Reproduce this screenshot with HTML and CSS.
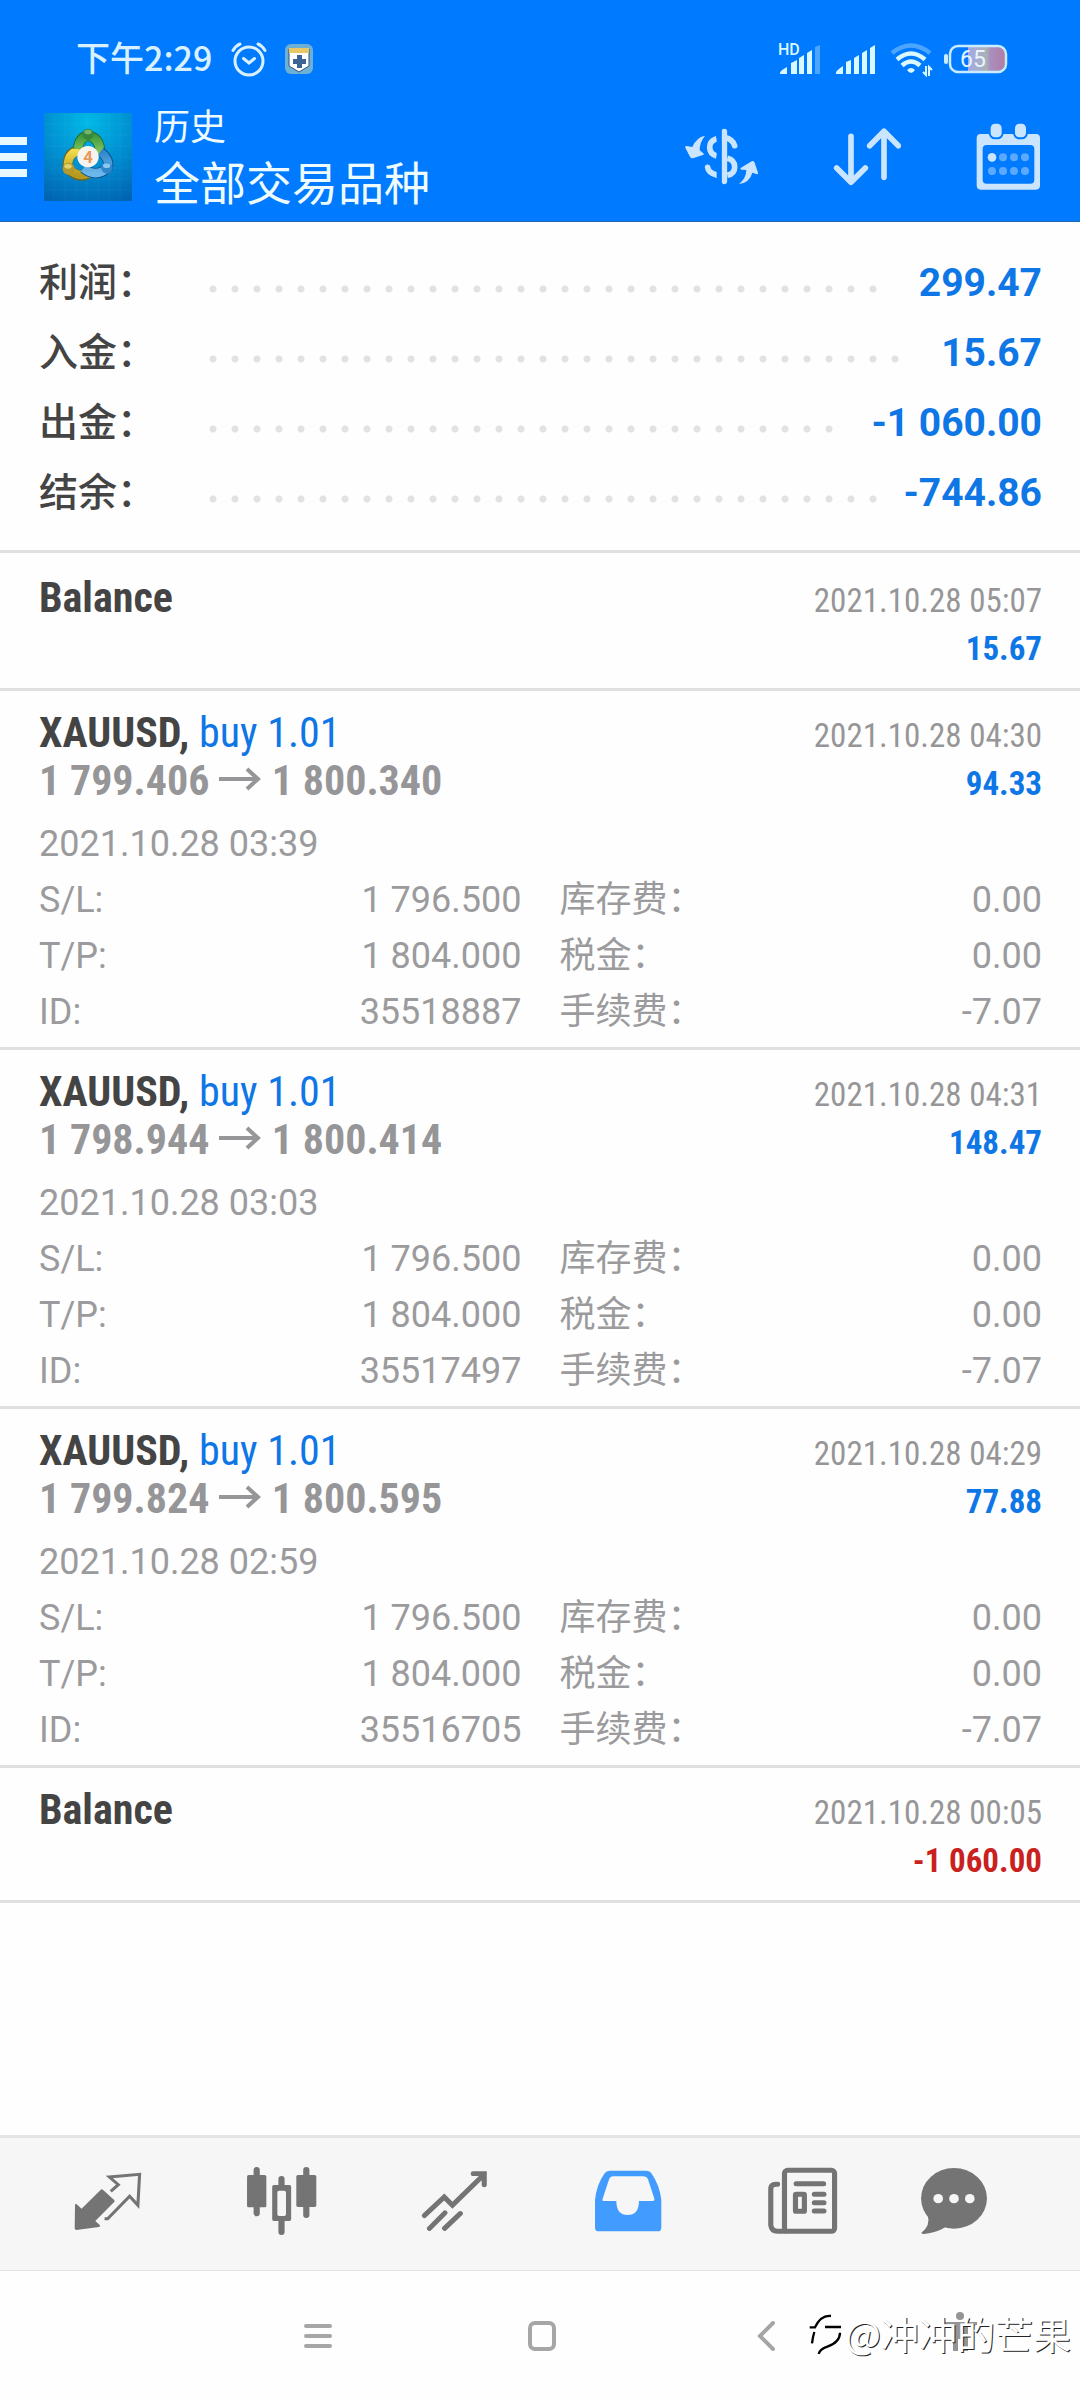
FILE: index.html
```html
<!DOCTYPE html>
<html lang="zh-CN">
<head>
<meta charset="utf-8">
<meta name="viewport" content="width=device-width, initial-scale=1">
<title>历史</title>
<link rel="stylesheet" href="styles.css">
</head>
<body>
<header class="top">
  <div class="status">
    <span class="clock">下午2:29</span>
    <svg class="alarm" width="37" height="36" viewBox="230 41 37 36" fill="none" stroke="#d9f1ff" stroke-width="3" stroke-linecap="round"><circle cx="249" cy="61" r="14"/><path d="M243.500 58.500l5.500 4.500 5.500-4.500M233 50.500q3-5 7-6.500M258 44q4 1.500 7 6.500"/></svg>
    <svg width="28" height="30" viewBox="0 0 28 30"><rect width="28" height="30" rx="6" fill="#6db0d6"/><path d="M4 5h20v17q-5 3-10 6q-5-3-10-6z" fill="#fff" stroke="#35507a" stroke-width="1"/><path d="M4 4h20v5H4z" fill="#e9c765"/><path d="M12 11h5v4h4v5h-4v4h-5v-4H8v-5h4z" fill="#3c6296"/></svg>
    <span class="spacer"></span>
    <svg width="44" height="36" viewBox="778 40 44 36" fill="#d9f8ff"><text class="hd" x="779" y="54">HD</text><path d="M781 73q-1-3 7-7v7zM792 73V62l6-3v14zM800 73V57l5-3v19zM808 73V52l5-3v24z"/><path d="M816 73V46l5-2v29z" opacity=".35"/></svg>
    <svg width="41" height="32" viewBox="835 42 41 32" fill="#d9f8ff"><path d="M836 73q-1-3 7-8v8zM846 73V61l5-2v14zM854 73V57l5-3v19zM862 73V52l5-3v24zM870 73V47l5-3v29z"/></svg>
    <svg width="43" height="36" viewBox="891 42 43 36" fill="none" stroke="#d9f8ff" stroke-width="4.500"><path d="M893 54q19-15 38 0" opacity=".35"/><path d="M898 60.500q14-12 28 0M903 66.500q9-8 18 0"/><path d="M908 71q4-4 8 0q-4 6-8 0z" fill="#d9f8ff" stroke="none"/><path d="M927 67v9l-3-3M930 77v-9l3 3" stroke-width="2"/></svg>
    <svg class="battery" width="64" height="30" viewBox="945 43 64 30"><defs><linearGradient id="charge"><stop offset="0" stop-color="#a5a9e8"/><stop offset=".5" stop-color="#a8b2b4"/><stop offset=".6" stop-color="#a98fc0"/><stop offset="1" stop-color="#b07da4"/></linearGradient></defs><path d="M969 46h29q8 0 8 8v8q0 8-8 8h-29z" fill="url(#charge)"/><rect x="951" y="45" width="56" height="26" rx="8" fill="none" stroke="#c9ecff" stroke-width="2.500"/><rect x="945" y="53" width="4" height="10" rx="2" fill="#c9ecff"/><text class="level" x="961" y="66">65</text></svg>
  </div>
  <div class="appbar">
    <button class="menu" aria-label="菜单"><i></i><i></i><i></i></button>
    <svg class="logo" width="88" height="88" viewBox="42 24 264 264" role="img" aria-label="MetaTrader 4">
      <defs>
        <radialGradient id="sky" cx=".5" cy=".1" r="1"><stop offset="0" stop-color="#00b9e6"/><stop offset=".5" stop-color="#008fd2"/><stop offset="1" stop-color="#0062b0"/></radialGradient>
        <linearGradient id="gr" x2="0" y2="1"><stop offset="0" stop-color="#3f9a3c"/><stop offset="1" stop-color="#8acb62"/></linearGradient>
        <linearGradient id="ye" x2="0" y2="1"><stop offset="0" stop-color="#f2dc4a"/><stop offset="1" stop-color="#b49a20"/></linearGradient>
        <linearGradient id="bl" x2="0" y2="1"><stop offset="0" stop-color="#2f86cc"/><stop offset="1" stop-color="#6db8ea"/></linearGradient>
      </defs>
      <rect x="42" y="24" width="264" height="264" fill="url(#sky)"/>
      <path d="M72 24v264M105 24v264M138 24v264M171 24v264M204 24v264M237 24v264M270 24v264M42 57h264M42 90h264M42 123h264M42 156h264M42 189h264M42 222h264M42 255h264" stroke="#fff" stroke-opacity=".07" stroke-width="2"/>
      <path d="M114 196q-8-50 34-62M174 208q-32 12-56-14" fill="none" stroke="#6f651c" stroke-width="30"/>
      <path d="M114 196q-6-52 36-60M176 206q-34 12-60-14" fill="none" stroke="url(#ye)" stroke-width="25"/>
      <path d="M144 132q4-36 30-40q38 6 36 56" fill="none" stroke="#1c6a3c" stroke-width="31"/>
      <path d="M144 132q4-36 30-40q38 6 36 56" fill="none" stroke="url(#gr)" stroke-width="26"/>
      <path d="M212 140q28 22 22 48q-36 32-74 2" fill="none" stroke="#0c4f8c" stroke-width="30"/>
      <path d="M212 140q28 22 22 48q-36 32-74 2" fill="none" stroke="url(#bl)" stroke-width="25"/>
      <circle cx="174" cy="88" r="17" fill="#37883b"/><ellipse cx="174" cy="81" rx="11" ry="7" fill="#9ad690" opacity=".6"/>
      <circle cx="116" cy="191" r="18" fill="#b39a2a"/><ellipse cx="114" cy="184" rx="11" ry="7" fill="#f7ea8c" opacity=".7"/>
      <circle cx="231" cy="189" r="17" fill="#2f86c8"/><ellipse cx="230" cy="182" rx="11" ry="7" fill="#b5e2ff" opacity=".7"/>
      <circle cx="174" cy="155" r="32" fill="#f7f4f0"/>
      <text class="four" x="174" y="174" text-anchor="middle">4</text>
    </svg>
    <div class="titles"><h1>历史</h1><p>全部交易品种</p></div>
    <button aria-label="交易品种"><svg width="73" height="57" viewBox="136 320 219 171" fill="none" stroke="#cbe5ff" stroke-width="17"><path d="M254 331v149" stroke-linecap="round"/><path d="M231 352q-21 6-21 26t21 26M263 411q22 5 22 26t-22 25"/><path d="M231 461q-25-7-27-23M254 348q26 6 31 25" stroke-linecap="round"/><path d="M231 320h15v171h-15z" fill="#007aff" stroke="none"/><path d="M196 343q-26 5-38 34l-17-3q-6 0-4 5l14 27q3 6 11 4l28-9q5-3 0-6l-10-8q0-24 16-44zM298 488q22-18 22-42l-14-1q-7-2-2-6l32-19q7-3 9 4l10 30q1 6-5 4l-12-4q-8 30-40 34z" fill="#cbe5ff" stroke="none"/></svg></button>
    <button aria-label="排序"><svg width="68" height="59" viewBox="572 320 204 177" fill="none" stroke="#cbe5ff" stroke-width="17" stroke-linecap="round" stroke-linejoin="round"><path d="M626 348v136M583 443l43 43 43-43M725 471V334M682 376l43-43 43 43"/></svg></button>
    <button aria-label="日期"><svg width="65" height="67" viewBox="1008 306 195 201" fill="#cbe5ff"><path fill-rule="evenodd" d="M1022 339h166q12 0 12 12v142q0 13-12 13h-166q-12 0-12-13V351q0-12 12-12zM1040 372q-12 0-12 12v92q0 12 12 12h131q12 0 12-12v-92q0-12-12-12z"/><rect x="1049" y="305" width="39" height="47" rx="16" stroke="#007aff" stroke-width="6"/><rect x="1122" y="305" width="39" height="47" rx="16" stroke="#007aff" stroke-width="6"/><circle cx="1056" cy="409" r="13"/><g opacity=".45"><circle cx="1089" cy="409" r="12"/><circle cx="1122" cy="409" r="12"/><circle cx="1155" cy="409" r="12"/><circle cx="1056" cy="450" r="12"/><circle cx="1089" cy="450" r="12"/><circle cx="1122" cy="450" r="12"/><circle cx="1155" cy="450" r="12"/></g></svg></button>
  </div>
</header>

<main class="content">
  <dl class="summary">
    <div><dt>利润：</dt><dd><span class="dots"></span>299.47</dd></div>
    <div><dt>入金：</dt><dd><span class="dots"></span>15.67</dd></div>
    <div><dt>出金：</dt><dd><span class="dots"></span>-1 060.00</dd></div>
    <div><dt>结余：</dt><dd><span class="dots"></span>-744.86</dd></div>
  </dl>
  <ul class="history">
    <li class="deal">
      <div class="line"><b>Balance</b><time>2021.10.28 05:07</time></div>
      <div class="line"><span></span><strong>15.67</strong></div>
    </li>
    <li class="deal trade">
      <div class="line"><span><b>XAUUSD,</b> <span class="side">buy 1.01</span></span><time>2021.10.28 04:30</time></div>
      <div class="line"><span class="prices">1 799.406 <svg width="43" height="24" viewBox="0 0 43 24"><path d="M0 12h39M28 2l11 10-11 10"/></svg> 1 800.340</span><strong>94.33</strong></div>
      <time class="opened">2021.10.28 03:39</time>
      <dl class="details">
        <div><dt>S/L:</dt><dd>1 796.500</dd></div><div><dt>库存费：</dt><dd>0.00</dd></div>
        <div><dt>T/P:</dt><dd>1 804.000</dd></div><div><dt>税金：</dt><dd>0.00</dd></div>
        <div><dt>ID:</dt><dd>35518887</dd></div><div><dt>手续费：</dt><dd>-7.07</dd></div>
      </dl>
    </li>
    <li class="deal trade">
      <div class="line"><span><b>XAUUSD,</b> <span class="side">buy 1.01</span></span><time>2021.10.28 04:31</time></div>
      <div class="line"><span class="prices">1 798.944 <svg width="43" height="24" viewBox="0 0 43 24"><path d="M0 12h39M28 2l11 10-11 10"/></svg> 1 800.414</span><strong>148.47</strong></div>
      <time class="opened">2021.10.28 03:03</time>
      <dl class="details">
        <div><dt>S/L:</dt><dd>1 796.500</dd></div><div><dt>库存费：</dt><dd>0.00</dd></div>
        <div><dt>T/P:</dt><dd>1 804.000</dd></div><div><dt>税金：</dt><dd>0.00</dd></div>
        <div><dt>ID:</dt><dd>35517497</dd></div><div><dt>手续费：</dt><dd>-7.07</dd></div>
      </dl>
    </li>
    <li class="deal trade">
      <div class="line"><span><b>XAUUSD,</b> <span class="side">buy 1.01</span></span><time>2021.10.28 04:29</time></div>
      <div class="line"><span class="prices">1 799.824 <svg width="43" height="24" viewBox="0 0 43 24"><path d="M0 12h39M28 2l11 10-11 10"/></svg> 1 800.595</span><strong>77.88</strong></div>
      <time class="opened">2021.10.28 02:59</time>
      <dl class="details">
        <div><dt>S/L:</dt><dd>1 796.500</dd></div><div><dt>库存费：</dt><dd>0.00</dd></div>
        <div><dt>T/P:</dt><dd>1 804.000</dd></div><div><dt>税金：</dt><dd>0.00</dd></div>
        <div><dt>ID:</dt><dd>35516705</dd></div><div><dt>手续费：</dt><dd>-7.07</dd></div>
      </dl>
    </li>
    <li class="deal">
      <div class="line"><b>Balance</b><time>2021.10.28 00:05</time></div>
      <div class="line"><span></span><strong class="loss">-1 060.00</strong></div>
    </li>
  </ul>
</main>

<nav class="tabs">
  <button aria-label="行情"><svg width="68" height="60" viewBox="216 156 198 180" preserveAspectRatio="none"><path d="M219 257q1-4 5-1l14 13 56-57q3-3 6 0l33 31q3 3 0 6l-55 57 13 12q3 5-2 6l-66 9q-5 0-5-5z" fill="#747474"/><path d="M323 217l22-20-26-23 88-8-5 93-24-27-64 67h-9" fill="none" stroke="#747474" stroke-width="9"/></svg></button>
  <button aria-label="图表"><svg width="71" height="70" viewBox="713 141 206 210" preserveAspectRatio="none" fill="#747474"><rect x="716" y="168" width="56" height="97" rx="5"/><rect x="859" y="168" width="58" height="96" rx="5"/><path fill-rule="evenodd" d="M794 198h45q5 0 5 5v98q0 5-5 5h-45q-5 0-5-5v-98q0-5 5-5zM809 215q-5 0-5 5v66q0 5 5 5h15q5 0 5-5v-66q0-5-5-5z"/><path d="M744 153v130M888 153v135M816 180v20M816 306v33" stroke="#747474" stroke-width="18" stroke-linecap="round"/></svg></button>
  <button aria-label="交易"><svg width="67" height="62" viewBox="1221 149 196 188" preserveAspectRatio="none" fill="none" stroke="#747474" stroke-width="15" stroke-linecap="round"><path d="M1231 287l58-56 24 25 90-91M1374 160h32v34M1246 326l45-47M1290 326l46-45"/></svg></button>
  <button aria-label="历史"><svg width="68" height="62" viewBox="155 150 198 186" preserveAspectRatio="none"><path fill="#429bff" fill-rule="evenodd" d="M158 323v-83q4-45 28-80 5-8 14-8h108q10 0 14 8 24 35 29 80v83q0 11-11 11H169q-11 0-11-11zM180 237l19-59q3-9 12-9h89q8 0 12 8l19 60q1 6-5 6h-40q0 42-33 42t-33-42h-36q-6 0-4-6z"/></svg></button>
  <button aria-label="新闻"><svg width="71" height="68" viewBox="654 141 207 204" preserveAspectRatio="none" fill="none" stroke="#747474" stroke-width="15"><rect x="705" y="151" width="146" height="183" rx="9"/><path d="M685 193q-20-2-20 14v108q2 19 20 19h24M739 191h80M792 223h28M792 248h28M792 273h28" stroke-linecap="round"/><rect x="737" y="223" width="26" height="51" rx="2"/></svg></button>
  <button aria-label="消息"><svg width="68" height="68" viewBox="1100 141 198 204" preserveAspectRatio="none" fill="#747474"><ellipse cx="1199" cy="235" rx="96" ry="91"/><path d="M1122 284q10 32-18 54 0 4 8 4 38-5 62-20z"/><g fill="#f6f6f6"><circle cx="1153" cy="236" r="14"/><circle cx="1199" cy="236" r="14"/><circle cx="1245" cy="236" r="14"/></g></svg></button>
</nav>

<footer class="system">
  <button aria-label="最近任务"><svg width="28" height="28" viewBox="0 0 28 28" stroke="#a6a6a6" stroke-width="4" stroke-linecap="round"><path d="M2 4h24M2 14h24M2 24h24"/></svg></button>
  <button aria-label="主屏幕"><svg width="28" height="30" viewBox="0 0 28 30" fill="none" stroke="#a6a6a6" stroke-width="4"><rect x="2" y="2" width="24" height="26" rx="5"/></svg></button>
  <button aria-label="返回"><svg width="18" height="30" viewBox="0 0 18 30" fill="none" stroke="#a6a6a6" stroke-width="4" stroke-linecap="round"><path d="M16 2L3 15l13 13"/></svg></button>
  <button class="access" aria-label="无障碍"><svg width="34" height="40" viewBox="0 0 34 40" fill="#949494"><circle cx="17" cy="4" r="4"/><path d="M0 10h34v3l-9 2v24h-6V27h-4v12h-5V15L0 13z"/></svg></button>
  <div class="watermark">
    <svg width="33" height="42" viewBox="26 62 99 126" fill="none" stroke="#000" stroke-width="7"><path d="M28 108h16q18-38 48-34M74 107h48M42 122q-4 12-7 34M119 124q0 28-38 42-23 8-26 22"/></svg>
    <span>@冲冲的芒果</span>
  </div>
</footer>
</body>
</html>
```
FILE: styles.css
```css
* { box-sizing: border-box; margin: 0; padding: 0; }

body {
  display: flex;
  flex-direction: column;
  min-height: 100vh;
  background: #fefefe;
  color: #444;
  font-family: Roboto, "Noto Sans CJK SC", sans-serif;
}

button { display: flex; border: 0; background: none; color: inherit; }
svg { display: block; flex: none; }
ul { list-style: none; }

/* Header */
.top { background: #007aff; border-bottom: 1px solid #1f66b5; color: #eefbff; }

.status {
  display: flex;
  align-items: center;
  height: 94px;
  padding: 23px 72px 0 76px;
}
.clock {
  padding-bottom: 4px;
  font: 500 34px/40px "Noto Sans CJK SC", sans-serif;
  color: #d9f1ff;
}
.alarm { margin: 0 18px; }
.spacer { flex: 1; }
.status .spacer ~ svg + svg { margin-left: 14px; }
.status .spacer ~ .battery { margin-left: 11px; }
.hd { font: 500 16px Roboto, sans-serif; }
.level { font: 400 23px Roboto, sans-serif; fill: #e6f4ff; }

.appbar {
  display: flex;
  align-items: center;
  gap: 75px;
  height: 127px;
  padding: 0 39px 2px 0;
}
.menu { flex-direction: column; gap: 8px; width: 27px; margin-right: -58px; }
.menu i { width: 100%; height: 8px; background: #e8f8ff; }
.logo { margin-right: -53px; }
.four { font: 700 50px Roboto, sans-serif; fill: #e5995c; }
.titles { flex: 1; padding-bottom: 6px; font-family: "Noto Sans CJK SC", sans-serif; }
.titles h1 { font-size: 36px; font-weight: 400; line-height: 52px; }
.titles p { font-size: 46px; line-height: 60px; }

/* Totals */
.content { flex: 1; }
.summary { padding: 24px 38px 24px 39px; border-bottom: 3px solid #e0e0e0; }
.summary div { display: grid; grid-template-columns: 163px 1fr; height: 70px; font-size: 39px; }
.summary dt { font-family: "Noto Sans CJK SC", sans-serif; font-weight: 500; line-height: 66px; }
.summary dd { display: flex; align-items: center; gap: 18px; font-weight: 700; line-height: 74px; color: #0f76e6; }
.dots { flex: 1; padding-top: 12px; }
.dots::before {
  content: "";
  display: block;
  width: round(down, 100%, 22px);
  height: 8px;
  background: radial-gradient(circle, #e2e2e2 3px, transparent 4px) 0 0 / 22px 8px repeat-x;
}

/* Deals */
.history { padding-top: 3px; }
.deal { padding: 18px 38px 18px 39px; border-bottom: 3px solid #e0e0e0; }
.trade { padding-bottom: 7px; }
.line {
  display: flex;
  justify-content: space-between;
  align-items: baseline;
  height: 48px;
  font: 400 42px/48px "Roboto Condensed", Roboto, sans-serif;
}
.line > span:empty::before { content: "\200b"; }
.line time { font-size: 33px; color: #969698; }
.line strong { font-size: 33px; color: #0f76e6; }
.line .loss { color: #c9211e; }
.side { color: #0f76e6; }
.prices { font-weight: 700; color: #969698; }
.prices svg { display: inline-block; vertical-align: 4px; fill: none; stroke: #969698; stroke-width: 4; }
.opened { display: block; margin-top: 11px; }
.opened, .details { font-size: 36px; line-height: 56px; color: #9b9b9d; }
.details { display: grid; grid-template-columns: 1fr 1fr; column-gap: 38px; }
.details div { display: flex; justify-content: space-between; height: 56px; }

/* Bottom navigation */
.tabs {
  display: grid;
  grid-template-columns: repeat(5, 16fr) 12fr;
  align-items: center;
  justify-items: center;
  height: 136px;
  padding: 0 61px 6px 21px;
  background: #f6f6f6;
  border-top: 3px solid #e4e4e4;
  border-bottom: 1px solid #e2e2e2;
}

.system {
  position: relative;
  display: grid;
  grid-template-columns: repeat(3, 56fr) 41fr;
  align-items: center;
  justify-items: center;
  height: 129px;
  padding: 0 38px 0 206px;
}
.access { padding-bottom: 8px; }
.watermark {
  position: absolute;
  right: 9px;
  top: 30px;
  display: flex;
  align-items: center;
  gap: 3px;
  color: #fff;
  font: 400 38px/64px "Noto Sans CJK SC", sans-serif;
  text-shadow: 1px 1px 0 #222;
}
```
